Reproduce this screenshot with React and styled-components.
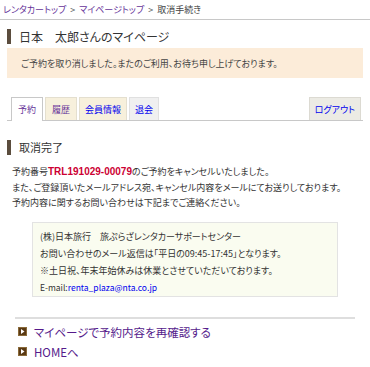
import React from 'react';
import styled, { createGlobalStyle } from 'styled-components';

const GlobalStyle = createGlobalStyle`
  body {
    margin: 0;
    background: #fff;
    font-family: "Noto Sans CJK JP", "Noto Sans", sans-serif;
    font-feature-settings: "palt";
    color: #333;
  }
`;

const Page = styled.div`
  width: 370px;
  height: 367px;
  overflow: hidden;
`;

const Breadcrumb = styled.div`
  display: flex;
  align-items: center;
  gap: 3px;
  height: 19px;
  padding: 0 3px;
  font-size: 9px;
  color: #444;
  border-bottom: 1px solid #c8c8c8;
`;

const Crumb = styled.a`
  color: #663399;
  text-decoration: none;
`;

const Sep = styled.span`
  color: #555;
  font-size: 9px;
  padding: 0 1px;
`;

const Main = styled.div`
  padding: 0 7px;
`;

const Heading = styled.h1`
  margin: ${({ $top }) => $top}px 0 0;
  border-left: 4px solid #5b4d3e;
  padding-left: 8px;
  height: 15px;
  line-height: 15px;
  font-size: ${({ $size }) => $size}px;
  font-weight: normal;
  color: #333;
`;

const Notice = styled.div`
  margin-top: 4px;
  background: #fcecd9;
  padding: 0 14px;
  height: 30px;
  display: flex;
  align-items: center;
  font-size: 9px;
  color: #444;
`;

const Tabs = styled.div`
  margin-top: 19px;
  display: flex;
  gap: 2px;
  padding: 0 2px 0 4px;
  border-bottom: 1px solid #c8c8c8;
`;

const Tab = styled.a`
  display: flex;
  align-items: center;
  padding: 0 ${({ $pad }) => $pad}px;
  font-size: 9px;
  text-decoration: none;
  color: ${({ $color }) => $color};
  background: ${({ $bg }) => $bg};
  border: 1px solid ${({ $border }) => $border};
  border-bottom: none;
  margin-left: ${({ $push }) => ($push ? 'auto' : '0')};
  margin-bottom: ${({ $active }) => ($active ? '-1px' : '0')};
  height: ${({ $active }) => ($active ? '23px' : '22px')};
`;

const Para = styled.div`
  margin-top: 9px;
  padding: 0 5px;
  font-size: 9px;
  line-height: 15.5px;
  color: #333;
`;

const Code = styled.span`
  color: #cc0033;
  font-weight: bold;
  font-size: 10px;
  font-family: "Liberation Sans", Arial, sans-serif;
`;

const InfoBox = styled.div`
  margin: 11px 25px 0;
  background: #fafcf0;
  border: 1px solid #e3e3e3;
  padding: 5px 7px 1px;
  font-size: 9px;
  line-height: 17px;
  color: #333;
`;

const Mail = styled.div`
  font-size: 8.5px;
  line-height: 16px;
  color: #333;
`;

const MailLink = styled.a`
  color: #0000ee;
  text-decoration: none;
`;

const Rule = styled.hr`
  margin: 20px 8px 0;
  border: none;
  height: 2px;
  background: #dedede;
`;

const LinkList = styled.ul`
  list-style: none;
  margin: 3px 0 0;
  padding: 0 11px;
`;

const LinkItem = styled.li`
  display: flex;
  align-items: center;
  gap: 7px;
  height: 20px;
  font-size: 11.5px;
`;

const BigLink = styled.a`
  color: #551a8b;
  text-decoration: none;
`;

const Arrow = () => (
  <svg width="9" height="9" viewBox="0 0 9 9">
    <rect width="9" height="9" fill="#5a3a14" />
    <rect x="0.5" y="0.5" width="8" height="8" fill="none" stroke="#8a6a3a" strokeWidth="1" />
    <polygon points="3,2 6.5,4.5 3,7" fill="#fff" />
  </svg>
);

export default function App() {
  return (
    <Page>
      <GlobalStyle />
      <Breadcrumb>
        <Crumb href="#">レンタカートップ</Crumb>
        <Sep>&gt;</Sep>
        <Crumb href="#">マイページトップ</Crumb>
        <Sep>&gt;</Sep>
        <span>取消手続き</span>
      </Breadcrumb>
      <Main>
        <Heading $top={9} $size={12}>日本　太郎さんのマイページ</Heading>
        <Notice>ご予約を取り消しました。またのご利用、お待ち申し上げております。</Notice>
        <Tabs>
          <Tab $active $pad={6} $color="#663399" $bg="#fff" $border="#c8c8c8">予約</Tab>
          <Tab $pad={6} $color="#663399" $bg="#f7f0dc" $border="#e4dfcf">履歴</Tab>
          <Tab $pad={5} $color="#0000ee" $bg="#f7f0dc" $border="#e4dfcf">会員情報</Tab>
          <Tab $pad={5} $color="#0000ee" $bg="#f0f0f0" $border="#e0e0e0">退会</Tab>
          <Tab $push $pad={5} $color="#0000ee" $bg="#ecebe4" $border="#dcdad2">ログアウト</Tab>
        </Tabs>
        <Heading $top={19} $size={11}>取消完了</Heading>
        <Para>
          予約番号<Code>TRL191029-00079</Code>のご予約をキャンセルいたしました。<br />
          また、ご登録頂いたメールアドレス宛、キャンセル内容をメールにてお送りしております。<br />
          予約内容に関するお問い合わせは下記までご連絡ください。
        </Para>
        <InfoBox>
          (株)日本旅行　旅ぷらざレンタカーサポートセンター<br />
          お問い合わせのメール返信は「平日の09:45-17:45」となります。<br />
          ※土日祝、年末年始休みは休業とさせていただいております。
          <Mail>E-mail:<MailLink href="#">renta_plaza@nta.co.jp</MailLink></Mail>
        </InfoBox>
        <Rule />
        <LinkList>
          <LinkItem><Arrow /><BigLink href="#">マイページで予約内容を再確認する</BigLink></LinkItem>
          <LinkItem><Arrow /><BigLink href="#">HOMEへ</BigLink></LinkItem>
        </LinkList>
      </Main>
    </Page>
  );
}
